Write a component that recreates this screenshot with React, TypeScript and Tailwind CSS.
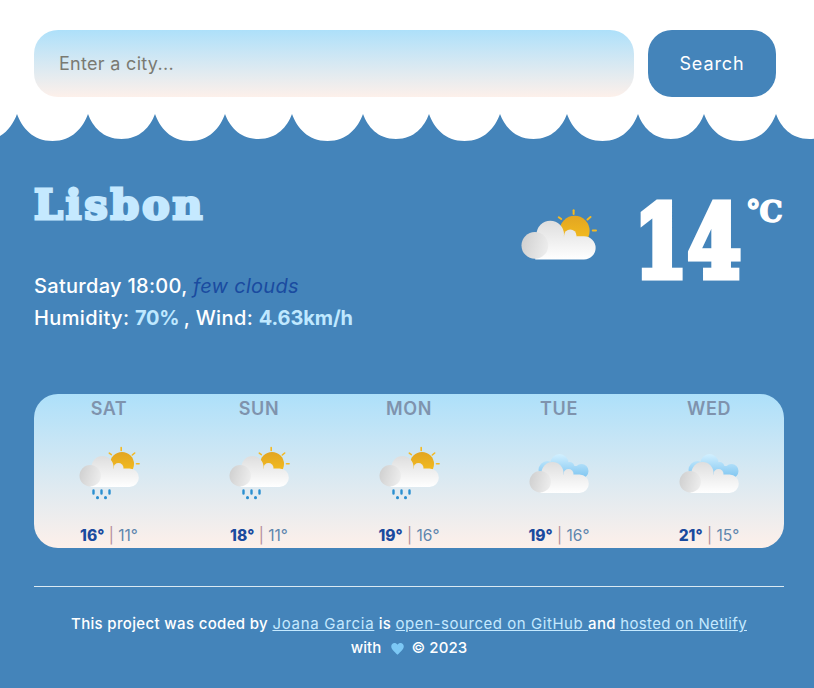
const cusps = [-54, 17, 88, 155, 225, 292, 363, 429, 500, 567, 638, 704, 776, 843];

function wavePath() {
  let d = "M-54 27 L-54 0";
  for (let i = 1; i < cusps.length; i++) {
    const a = cusps[i - 1];
    const b = cusps[i];
    const w = b - a;
    const h = w > 69 ? 27 : 25;
    const m = a + w / 2;
    d += ` C${a + w * 0.07} ${h * 0.5} ${a + w * 0.22} ${h} ${m} ${h}`;
    d += ` C${b - w * 0.22} ${h} ${b - w * 0.07} ${h * 0.5} ${b} 0`;
  }
  return d + " L843 27 Z";
}

function Cloud({ id, dy = 0 }: { id: string; dy?: number }) {
  return (
    <g transform={`translate(0 ${dy})`}>
      <defs>
        <linearGradient id={`${id}b`} x1="0" y1="456" x2="0" y2="487" gradientUnits="userSpaceOnUse">
          <stop offset="0" stopColor="#dedede" />
          <stop offset="1" stopColor="#ffffff" />
        </linearGradient>
        <linearGradient id={`${id}l`} x1="79" y1="472" x2="101" y2="478" gradientUnits="userSpaceOnUse">
          <stop offset="0" stopColor="#d0d0d0" />
          <stop offset="1" stopColor="#eeeeee" />
        </linearGradient>
      </defs>
      <g fill={`url(#${id}b)`}>
        <circle cx="102" cy="467" r="11" />
        <circle cx="118" cy="468" r="5" />
        <path d="M90 468.400H129a9.300 9.300 0 0 1 0 18.600H90Z" />
      </g>
      <circle cx="89.700" cy="475.700" r="10.700" fill={`url(#${id}l)`} />
    </g>
  );
}

function WeatherIcon({ kind, id, className }: { kind: "rain" | "few" | "cloudy"; id: string; className: string }) {
  return (
    <svg viewBox="71.5 445 75 60" className={className}>
      <defs>
        <linearGradient id={`${id}s`} x1="0" y1="452" x2="0" y2="478" gradientUnits="userSpaceOnUse">
          <stop offset="0" stopColor="#e2a522" />
          <stop offset="1" stopColor="#f9c41d" />
        </linearGradient>
        <linearGradient id={`${id}c`} x1="0" y1="454" x2="0" y2="482" gradientUnits="userSpaceOnUse">
          <stop offset="0" stopColor="#d2f0ff" />
          <stop offset="1" stopColor="#6fbdee" />
        </linearGradient>
      </defs>
      {kind !== "cloudy" && (
        <g>
          <circle cx="121.500" cy="464" r="12" fill={`url(#${id}s)`} />
          <g stroke="#f5b921" strokeWidth="1.600" strokeLinecap="round" fill="none">
            <path d="M120.700 447.500V450.500" />
            <path d="M108.800 453.200L110.800 454.600" />
            <path d="M131.800 455L134.200 453" />
            <path d="M136 463.700H138.600" />
          </g>
        </g>
      )}
      {kind === "cloudy" ? (
        <g>
          <g fill={`url(#${id}c)`}>
            <circle cx="97" cy="470" r="9" />
            <circle cx="109" cy="463" r="9" />
            <circle cx="119" cy="467" r="5" />
            <circle cx="131" cy="471" r="7" />
            <rect x="92" y="466" width="44" height="14" rx="6" />
          </g>
          <Cloud id={id} dy={6} />
        </g>
      ) : (
        <Cloud id={id} />
      )}
      {kind === "rain" && (
        <g stroke="#2a8fd0" strokeLinecap="round" fill="none">
          <path strokeWidth="2.400" d="M93 490.500V493.500M101 490.500V493.500M109 490.500V493.500" />
          <path strokeWidth="3" d="M97 497.600V497.800M105 497.600V497.800" />
        </g>
      )}
    </svg>
  );
}

const days: { d: string; kind: "rain" | "cloudy"; hi: string; lo: string }[] = [
  { d: "SAT", kind: "rain", hi: "16°", lo: "11°" },
  { d: "SUN", kind: "rain", hi: "18°", lo: "11°" },
  { d: "MON", kind: "rain", hi: "19°", lo: "16°" },
  { d: "TUE", kind: "cloudy", hi: "19°", lo: "16°" },
  { d: "WED", kind: "cloudy", hi: "21°", lo: "15°" },
];

export default function App() {
  return (
    <div className="w-full h-[688px] overflow-hidden bg-white font-['Inter','Liberation_Sans',sans-serif] text-white">
      <div className="h-[114px] pt-[30px] pl-[34px] flex gap-[14px] items-start">
        <input
          placeholder="Enter a city..."
          className="w-[600px] h-[67px] rounded-[24px] pl-[25px] text-[18px] tracking-[0.3px] text-[#333] outline-none placeholder:text-[#7a7a72] bg-gradient-to-b from-[#ade0fa] to-[#fdf0ea]"
        />
        <button className="w-[128px] h-[67px] rounded-[24px] bg-[#4484ba] text-[18px] font-normal tracking-[0.9px] text-white">
          Search
        </button>
      </div>
      <svg viewBox="0 0 814 27" className="block w-[814px] h-[27px]">
        <path d={wavePath()} fill="#4484ba" />
      </svg>
      <div className="h-[547px] bg-[#4484ba] pl-[34px] pr-[30px] flex flex-col">
        <div className="h-[253px] flex justify-between">
          <div className="flex flex-col">
            <h1 className="mt-[32px] h-[64px] text-[41px] leading-[64px] font-bold font-['DejaVu_Serif',serif] text-[#c5e9ff] tracking-[3px] [-webkit-text-stroke:3px_#c5e9ff]">
              Lisbon
            </h1>
            <p className="mt-[33px] text-[20px] leading-[32px] font-medium tracking-[0.3px]">
              Saturday 18:00, <em className="font-normal text-[#1a4ba0]">few clouds</em>
            </p>
            <p className="text-[20px] leading-[32px] font-medium tracking-[0.38px]">
              Humidity: <strong className="font-bold tracking-[-0.3px] text-[#bfe8ff]">70% </strong>, Wind:{" "}
              <strong className="font-bold tracking-[-0.1px] text-[#bfe8ff]">4.63km/h</strong>
            </p>
          </div>
          <div className="flex items-start">
            <WeatherIcon kind="few" id="big" className="w-[94px] h-[75px] mt-[66px]" />
            <div className="ml-[28px] mt-[39px] w-[112px] text-[100px] leading-[124px] font-bold font-['DejaVu_Serif',serif] origin-left scale-x-[0.77] [-webkit-text-stroke:7px_white] whitespace-nowrap">
              14
            </div>
            <div className="mt-[53px] w-[38px] text-[29px] leading-[36px] font-bold font-['DejaVu_Serif',serif] tracking-[-1px] [-webkit-text-stroke:1.5px_white] whitespace-nowrap">
              °C
            </div>
          </div>
        </div>
        <div className="h-[154px] grid grid-cols-5 rounded-[24px] bg-gradient-to-b from-[#ade0fa] to-[#fdf0ea]">
          {days.map((x) => (
            <div key={x.d} className="flex flex-col items-center">
              <div className="h-[28px] pt-px text-[18px] leading-[28px] font-semibold text-[#7f93ad] tracking-[0.6px]">{x.d}</div>
              <WeatherIcon kind={x.kind} id={x.d} className="w-[75px] h-[60px] mt-[23px]" />
              <div className="mt-[19px] text-[15.5px] leading-[24px]">
                <strong className="font-extrabold text-[#1a4a9e]">{x.hi}</strong>
                <span className="text-[#b58f9a]"> | </span>
                <span className="text-[#5f86ad]">{x.lo}</span>
              </div>
            </div>
          ))}
        </div>
        <div className="mt-[38px] h-px bg-[#dbeaf3]" />
        <div className="mt-[25px] text-center text-[15px] leading-[24px] font-medium tracking-[0.34px]">
          <div className="whitespace-nowrap">
            This project was coded by <a className="underline font-normal tracking-[0.72px] text-[#c5e9ff]">Joana Garcia</a> is{" "}
            <a className="underline font-normal tracking-[0.55px] text-[#c5e9ff]">open-sourced on GitHub </a>and{" "}
            <a className="underline font-normal text-[#c5e9ff]">hosted on Netlify</a>
          </div>
          <div className="flex items-center justify-center tracking-[0.1px]">
            with
            <svg viewBox="0 0 24 24" className="w-[15px] h-[15px] ml-[9px] mr-[6px]">
              <path
                d="M12 22C7 17.500 2 13.500 2 8.500 2 5 4.500 3 7 3c2 0 4 1 5 3 1-2 3-3 5-3 2.500 0 5 2 5 5.500C22 13.500 17 17.500 12 22Z"
                fill="#7cc8f5"
              />
            </svg>
            © 2023
          </div>
        </div>
      </div>
    </div>
  );
}
